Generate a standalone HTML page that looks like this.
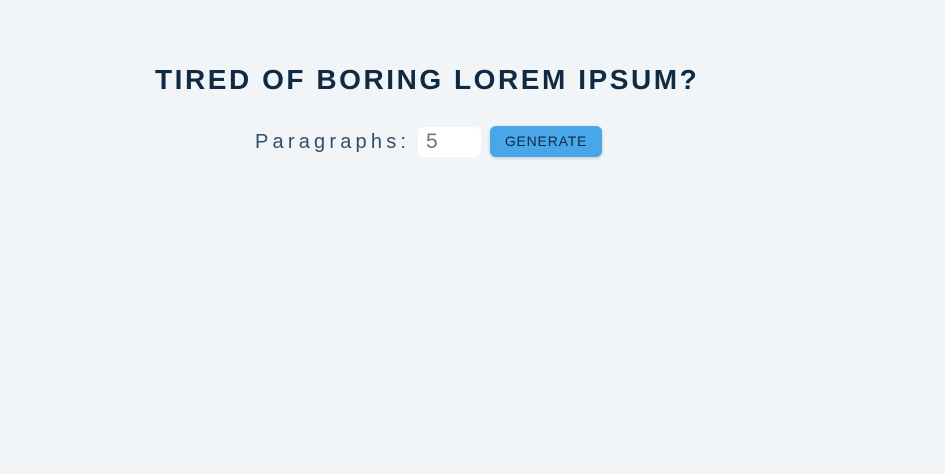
<!DOCTYPE html>
<html><head><style>
html,body{margin:0;padding:0;background:#f1f5f8;width:945px;height:474px;overflow:hidden;font-family:"Liberation Sans",sans-serif}
h1{position:absolute;left:155px;top:62px;margin:0;font-size:28px;font-weight:bold;letter-spacing:2.55px;color:#102a42;white-space:nowrap;line-height:36px}
.lab{position:absolute;left:255px;top:129px;font-size:20px;letter-spacing:4.2px;color:#324d67;line-height:26px;white-space:nowrap}
.inp{position:absolute;left:418px;top:127px;width:63px;height:30px;background:#fff;border-radius:6px;font-size:21px;color:#6f7378;line-height:30px;box-sizing:border-box;padding-left:8px}
.btn{position:absolute;left:490px;top:126px;width:112px;height:31px;background:#49a6e9;border-radius:6px;box-shadow:0 1px 3px rgba(0,0,0,.2);color:#102a42;font-size:14px;letter-spacing:0.8px;text-align:center;line-height:31px}
</style></head><body>
<h1>TIRED OF BORING LOREM IPSUM?</h1>
<div class="lab">Paragraphs:</div>
<div class="inp">5</div>
<div class="btn">GENERATE</div>
</body></html>
